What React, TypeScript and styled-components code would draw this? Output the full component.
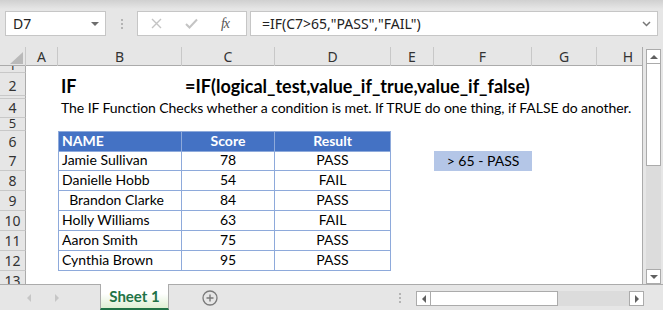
import React from 'react';
import styled, { createGlobalStyle } from 'styled-components';

const COLS = '26px 32px 124px 93px 116px 43px 98px 65px 63px';
const CELL_FONT = '"Lato", "Liberation Sans", sans-serif';
const UI_FONT = '"Noto Sans", "Open Sans", sans-serif';

const GlobalStyle = createGlobalStyle`
  html, body {
    margin: 0;
    padding: 0;
  }
  body {
    width: 663px;
    height: 310px;
    overflow: hidden;
    background: #e6e6e6;
    font-family: ${CELL_FONT};
  }
`;

const Window = styled.div`
  width: 663px;
  height: 310px;
  display: flex;
  flex-direction: column;
  overflow: hidden;
`;

// Formula bar
const FormulaBar = styled.div`
  height: 47px;
  box-sizing: border-box;
  display: flex;
  align-items: flex-start;
  padding: 11px 5px 0 5px;
  background: linear-gradient(#d0d0d0 0px, #e6e6e6 9px);
`;

const NameBox = styled.div`
  width: 101px;
  height: 25px;
  box-sizing: border-box;
  border: 1px solid #c6c6c6;
  background: #fff;
  display: flex;
  align-items: center;
  justify-content: space-between;
  padding: 0 6px 0 7px;
  font-family: ${UI_FONT};
  font-size: 14px;
  color: #222;
`;

const DropArrow = styled.span`
  width: 0;
  height: 0;
  border-left: 4px solid transparent;
  border-right: 4px solid transparent;
  border-top: 4px solid #6d6d6d;
`;

const Grip = styled.div`
  width: 31px;
  height: 25px;
  display: flex;
  flex-direction: column;
  align-items: center;
  justify-content: center;
  gap: 2px;
  span {
    width: 2px;
    height: 2px;
    background: #b4b4b4;
  }
`;

const FxButtons = styled.div`
  width: 110px;
  height: 25px;
  box-sizing: border-box;
  border: 1px solid #c6c6c6;
  background: #fff;
  display: grid;
  grid-template-columns: 36px 34px 1fr;
  align-items: center;
  justify-items: center;
`;

const Fx = styled.span`
  font-family: "Liberation Serif", serif;
  font-style: italic;
  font-size: 14px;
  color: #555;
  letter-spacing: -1px;
  padding-right: 4px;
`;

const FormulaInput = styled.div`
  flex: 1;
  margin-left: 3px;
  height: 25px;
  box-sizing: border-box;
  border: 1px solid #c6c6c6;
  background: #fff;
  display: flex;
  align-items: center;
  justify-content: space-between;
  padding: 0 6px 0 11px;
  font-family: ${UI_FONT};
  font-size: 14px;
  color: #222;
`;

// Sheet
const SheetArea = styled.div`
  height: 237px;
  display: flex;
`;

const GridPane = styled.div`
  width: 643px;
  box-sizing: border-box;
  border-right: 1px solid #ababab;
  background: #fff;
  overflow: hidden;
  display: flex;
  flex-direction: column;
`;

const Row = styled.div<{ $h: number }>`
  display: grid;
  grid-template-columns: ${COLS};
  height: ${(p) => p.$h}px;
  flex: none;
`;

const ColHeaderRow = styled(Row)`
  background: #e6e6e6;
  border-bottom: 1px solid #ababab;
  box-sizing: border-box;
`;

const ColHead = styled.div`
  display: flex;
  align-items: center;
  justify-content: center;
  border-right: 1px solid #c8c8c8;
  font-family: ${UI_FONT};
  font-size: 14px;
  color: #333;
`;

const Corner = styled.div`
  border-right: 1px solid #c8c8c8;
  position: relative;
  svg {
    position: absolute;
    right: 2px;
    bottom: 2px;
  }
`;

const RowHead = styled.div<{ $small?: boolean }>`
  background: #e6e6e6;
  border-right: 1px solid #ababab;
  border-bottom: 1px solid #c8c8c8;
  box-sizing: border-box;
  display: flex;
  align-items: flex-end;
  justify-content: center;
  overflow: hidden;
  font-family: ${UI_FONT};
  font-size: ${(p) => (p.$small ? 13 : 14)}px;
  line-height: ${(p) => (p.$small ? 12 : 17)}px;
  color: #333;
  padding-bottom: 1px;
`;

const Cell = styled.div<{ $align?: 'left' | 'center'; $bold?: boolean; $size?: number; $tight?: boolean }>`
  display: flex;
  align-items: flex-end;
  justify-content: ${(p) => (p.$align === 'center' ? 'center' : 'flex-start')};
  padding: 0 3px 1px 3px;
  white-space: pre;
  overflow: visible;
  font-family: ${CELL_FONT};
  font-size: ${(p) => p.$size || 14}px;
  font-weight: ${(p) => (p.$bold ? 700 : 400)};
  letter-spacing: ${(p) => (p.$tight ? '-0.07px' : 'normal')};
  color: #000;
  line-height: 18px;
`;

const TableCell = styled(Cell)<{ $head?: boolean; $first?: boolean }>`
  box-sizing: border-box;
  background: ${(p) => (p.$head ? '#4472c4' : 'transparent')};
  color: ${(p) => (p.$head ? '#fff' : '#000')};
  font-weight: ${(p) => (p.$head ? 700 : 400)};
  border-right: 1px solid #8eaadb;
  border-bottom: 1px solid #8eaadb;
  border-top: ${(p) => (p.$head ? '1px solid #8eaadb' : 'none')};
  border-left: ${(p) => (p.$first ? '1px solid #8eaadb' : 'none')};
`;

const Highlight = styled(Cell)`
  background: #b4c6e7;
  justify-content: center;
`;

// Vertical scrollbar
const VScroll = styled.div`
  width: 20px;
  box-sizing: border-box;
  padding: 2px 3px 0 3px;
  display: flex;
  flex-direction: column;
  background: #e6e6e6;
`;

const ScrollBtn = styled.div`
  flex: none;
  width: 15px;
  height: 15px;
  box-sizing: border-box;
  border: 1px solid #ababab;
  background: #fff;
  display: flex;
  align-items: center;
  justify-content: center;
`;

const Tri = styled.span<{ $dir: 'up' | 'down' | 'left' | 'right' }>`
  width: 0;
  height: 0;
  ${(p) =>
    p.$dir === 'up'
      ? 'border-left: 4px solid transparent; border-right: 4px solid transparent; border-bottom: 4px solid #606060;'
      : p.$dir === 'down'
      ? 'border-left: 4px solid transparent; border-right: 4px solid transparent; border-top: 4px solid #606060;'
      : p.$dir === 'left'
      ? 'border-top: 4px solid transparent; border-bottom: 4px solid transparent; border-right: 4px solid #606060;'
      : 'border-top: 4px solid transparent; border-bottom: 4px solid transparent; border-left: 4px solid #606060;'}
`;

const VThumb = styled.div`
  flex: none;
  width: 15px;
  height: 102px;
  box-sizing: border-box;
  border: 1px solid #ababab;
  border-top: none;
  background: #fff;
`;

const VTrack = styled.div`
  flex: 1;
  width: 15px;
  background: #dcdcdc;
`;

// Tab bar
const TabBar = styled.div`
  height: 26px;
  box-sizing: border-box;
  border-top: 1px solid #ababab;
  display: flex;
  align-items: stretch;
  background: #e6e6e6;
`;

const NavArrows = styled.div`
  width: 100px;
  display: flex;
  align-items: center;
  gap: 24px;
  padding-left: 27px;
  box-sizing: border-box;
`;

const NavTri = styled.span<{ $left?: boolean }>`
  width: 0;
  height: 0;
  border-top: 4px solid transparent;
  border-bottom: 4px solid transparent;
  ${(p) => (p.$left ? 'border-right: 4px solid #c6c6c6;' : 'border-left: 4px solid #c6c6c6;')}
`;

const SheetTab = styled.div`
  width: 69px;
  margin-top: -1px;
  box-sizing: border-box;
  border-left: 1px solid #ababab;
  border-right: 1px solid #ababab;
  border-bottom: 2px solid #217346;
  background: linear-gradient(#ffffff 40%, #dff0d3 100%);
  display: flex;
  align-items: center;
  justify-content: center;
  font-family: ${CELL_FONT};
  font-weight: 700;
  font-size: 15px;
  color: #217346;
`;

const AddSheet = styled.div`
  width: 82px;
  display: flex;
  align-items: center;
  justify-content: center;
`;

const HGrip = styled(Grip)`
  width: 165px;
  height: auto;
  align-items: flex-end;
  padding-right: 15px;
  box-sizing: border-box;
`;

const HScroll = styled.div`
  width: 228px;
  height: 15px;
  margin-top: 6px;
  display: flex;
`;

const HThumb = styled.div`
  width: 127px;
  height: 15px;
  box-sizing: border-box;
  border: 1px solid #ababab;
  border-left: none;
  background: #fff;
`;

const HTrack = styled.div`
  flex: 1;
  background: #dcdcdc;
`;

const columns = ['A', 'B', 'C', 'D', 'E', 'F', 'G', 'H'];

const people = [
  { name: 'Jamie Sullivan', score: '78', result: 'PASS' },
  { name: 'Danielle Hobb', score: '54', result: 'FAIL' },
  { name: '  Brandon Clarke', score: '84', result: 'PASS' },
  { name: 'Holly Williams', score: '63', result: 'FAIL' },
  { name: 'Aaron Smith', score: '75', result: 'PASS' },
  { name: 'Cynthia Brown', score: '95', result: 'PASS' },
];

const Empty: React.FC<{ n: number }> = ({ n }) => (
  <>
    {Array.from({ length: n }).map((_, i) => (
      <Cell key={i} />
    ))}
  </>
);

const App: React.FC = () => {
  return (
    <Window>
      <GlobalStyle />
      <FormulaBar>
        <NameBox>
          D7
          <DropArrow />
        </NameBox>
        <Grip>
          <span />
          <span />
          <span />
        </Grip>
        <FxButtons>
          <svg width="11" height="11" viewBox="0 0 11 11">
            <path d="M1 1 L10 10 M10 1 L1 10" stroke="#c4c4c4" strokeWidth="1.4" fill="none" />
          </svg>
          <svg width="13" height="11" viewBox="0 0 13 11">
            <path d="M1 6 L4.5 9.5 L12 1.5" stroke="#c4c4c4" strokeWidth="2" fill="none" />
          </svg>
          <Fx>fx</Fx>
        </FxButtons>
        <FormulaInput>
          =IF(C7&gt;65,"PASS","FAIL")
          <svg width="9" height="6" viewBox="0 0 9 6">
            <path d="M1 1 L4.5 4.5 L8 1" stroke="#777" strokeWidth="1.5" fill="none" />
          </svg>
        </FormulaInput>
      </FormulaBar>

      <SheetArea>
        <GridPane>
          <ColHeaderRow $h={19}>
            <Corner>
              <svg width="13" height="12" viewBox="0 0 13 12">
                <polygon points="13,0 13,12 0,12" fill="#b9b9b9" />
              </svg>
            </Corner>
            {columns.map((c) => (
              <ColHead key={c}>{c}</ColHead>
            ))}
          </ColHeaderRow>

          <Row $h={7}>
            <RowHead $small>1</RowHead>
            <Empty n={8} />
          </Row>
          <Row $h={23}>
            <RowHead>2</RowHead>
            <Cell />
            <Cell $bold $size={18}>IF</Cell>
            <Cell $bold $size={18}>=IF(logical_test,value_if_true,value_if_false)</Cell>
            <Empty n={5} />
          </Row>
          <Row $h={3}>
            <RowHead />
            <Empty n={8} />
          </Row>
          <Row $h={19}>
            <RowHead>4</RowHead>
            <Cell />
            <Cell $tight>The IF Function Checks whether a condition is met. If TRUE do one thing, if FALSE do another.</Cell>
            <Empty n={6} />
          </Row>
          <Row $h={13}>
            <RowHead $small>5</RowHead>
            <Empty n={8} />
          </Row>
          <Row $h={20}>
            <RowHead>6</RowHead>
            <Cell />
            <TableCell $head $first>NAME</TableCell>
            <TableCell $head $align="center">Score</TableCell>
            <TableCell $head $align="center">Result</TableCell>
            <Empty n={4} />
          </Row>
          {people.map((p, i) => (
            <Row $h={20} key={p.name}>
              <RowHead>{i + 7}</RowHead>
              <Cell />
              <TableCell $first>{p.name}</TableCell>
              <TableCell $align="center">{p.score}</TableCell>
              <TableCell $align="center">{p.result}</TableCell>
              <Cell />
              {i === 0 ? <Highlight>&gt; 65 - PASS</Highlight> : <Cell />}
              <Empty n={2} />
            </Row>
          ))}
          <Row $h={20}>
            <RowHead>13</RowHead>
            <Empty n={8} />
          </Row>
        </GridPane>

        <VScroll>
          <ScrollBtn>
            <Tri $dir="up" />
          </ScrollBtn>
          <VThumb />
          <VTrack />
          <ScrollBtn>
            <Tri $dir="down" />
          </ScrollBtn>
        </VScroll>
      </SheetArea>

      <TabBar>
        <NavArrows>
          <NavTri $left />
          <NavTri />
        </NavArrows>
        <SheetTab>Sheet 1</SheetTab>
        <AddSheet>
          <svg width="16" height="16" viewBox="0 0 16 16">
            <circle cx="8" cy="8" r="7" stroke="#7a7a7a" strokeWidth="1.3" fill="none" />
            <path d="M8 4.5 V11.5 M4.5 8 H11.5" stroke="#7a7a7a" strokeWidth="1.4" />
          </svg>
        </AddSheet>
        <HGrip>
          <span />
          <span />
          <span />
        </HGrip>
        <HScroll>
          <ScrollBtn>
            <Tri $dir="left" />
          </ScrollBtn>
          <HThumb />
          <HTrack />
          <ScrollBtn>
            <Tri $dir="right" />
          </ScrollBtn>
        </HScroll>
      </TabBar>
    </Window>
  );
};

export default App;
